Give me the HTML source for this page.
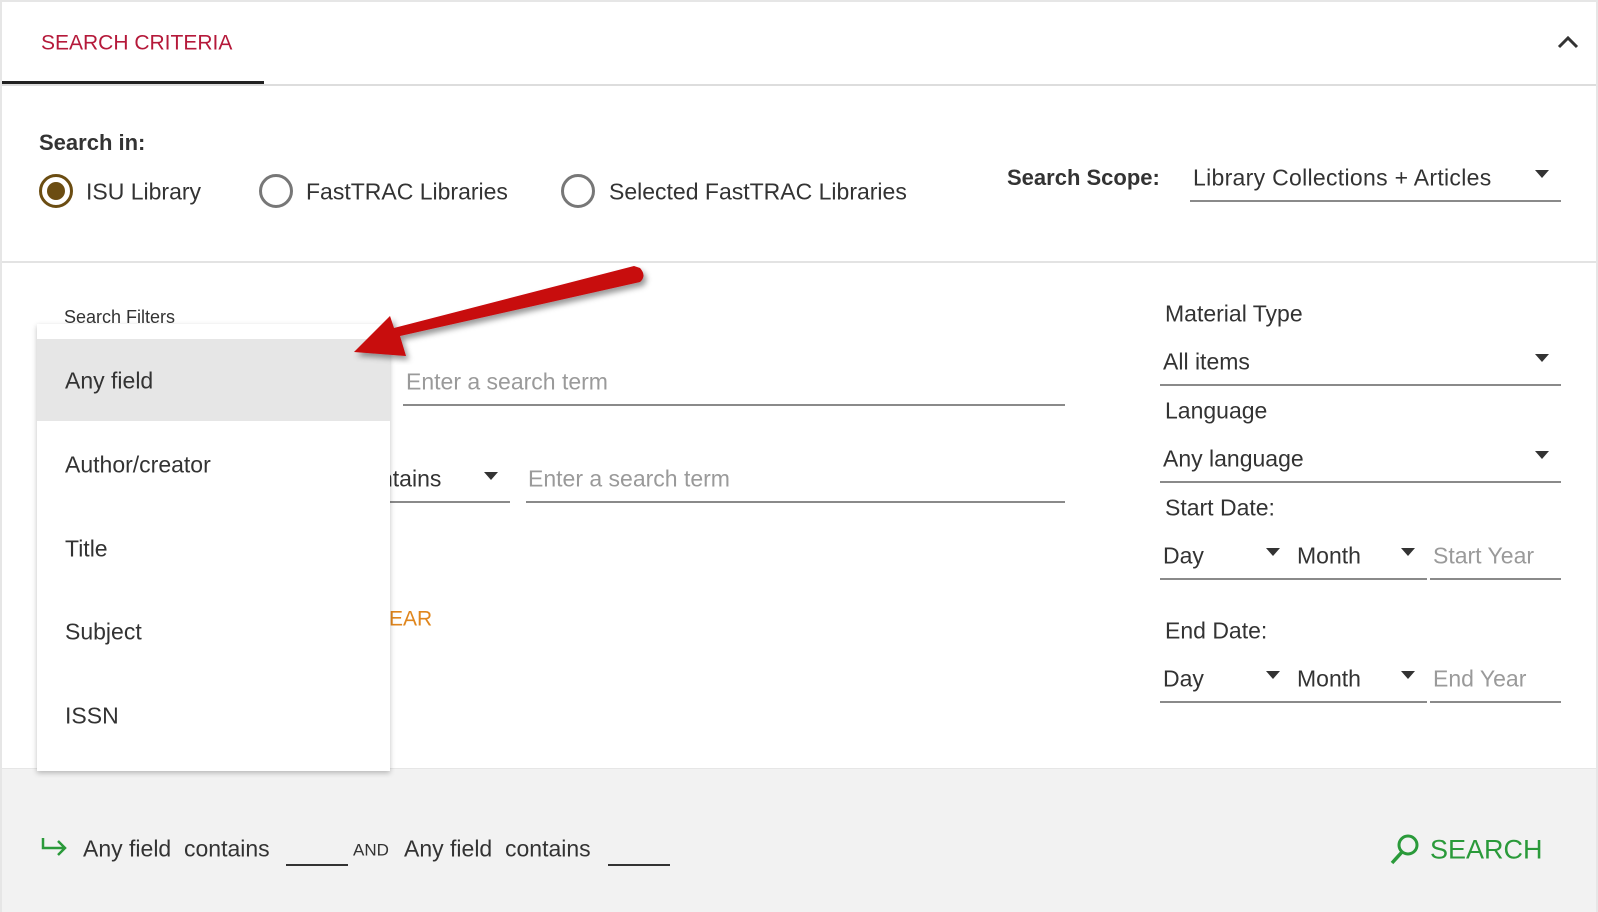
<!DOCTYPE html>
<html><head><meta charset="utf-8"><style>
*{margin:0;padding:0;box-sizing:border-box}
body{width:1598px;height:912px;background:#fff;position:relative;overflow:hidden;font-family:"Liberation Sans",sans-serif;color:#333}
.a{position:absolute;white-space:nowrap;line-height:1}
.t{font-size:23px;transform:translateY(-50%)}
.ph{color:#9a9a9a}
.ln{position:absolute;height:2px;background:#8a8a8a}
.tri{position:absolute;width:0;height:0;border-left:7px solid transparent;border-right:7px solid transparent;border-top:8px solid #333}
.rad{position:absolute;width:34px;height:34px;border:3px solid #777;border-radius:50%;transform:translate(-50%,-50%)}
</style></head><body>
<div style="position:absolute;left:0;top:0;width:1598px;height:912px;border:2px solid #e6e6e6;border-bottom:none"></div>
<div class="a t" style="left:41px;top:43px;font-size:21px;color:#b5193a">SEARCH CRITERIA</div>
<div style="position:absolute;left:2px;top:84px;width:1594px;height:2px;background:#ddd"></div>
<div style="position:absolute;left:2px;top:81px;width:262px;height:3px;background:#222"></div>
<svg style="position:absolute;left:1556px;top:34px" width="24" height="16"><path d="M3 13 L12 4 L21 13" stroke="#333" stroke-width="3" fill="none"/></svg>

<div class="a t" style="left:39px;top:143px;font-weight:bold;font-size:22px">Search in:</div>
<div class="rad" style="left:56px;top:191px;border-color:#6b4d12"></div>
<div style="position:absolute;left:47px;top:182px;width:18px;height:18px;border-radius:50%;background:#6b4d12"></div>
<div class="a t" style="left:86px;top:192px">ISU Library</div>
<div class="rad" style="left:276px;top:191px"></div>
<div class="a t" style="left:306px;top:192px">FastTRAC Libraries</div>
<div class="rad" style="left:578px;top:191px"></div>
<div class="a t" style="left:609px;top:192px">Selected FastTRAC Libraries</div>
<div class="a t" style="left:1007px;top:178px;font-weight:bold;font-size:22px">Search Scope:</div>
<div class="a t" style="left:1193px;top:178px;letter-spacing:0.3px">Library Collections + Articles</div>
<div class="tri" style="left:1535px;top:170px"></div>
<div class="ln" style="left:1190px;top:200px;width:371px"></div>
<div style="position:absolute;left:2px;top:261px;width:1594px;height:2px;background:#e3e3e3"></div>

<div class="a t" style="left:64px;top:317px;font-size:18px">Search Filters</div>
<div class="a t ph" style="left:406px;top:382px">Enter a search term</div>
<div class="ln" style="left:403px;top:404px;width:662px"></div>
<div class="a t" style="left:380px;top:479px">ntains</div>
<div class="tri" style="left:484px;top:472px"></div>
<div class="ln" style="left:380px;top:501px;width:130px"></div>
<div class="a t ph" style="left:528px;top:479px">Enter a search term</div>
<div class="ln" style="left:526px;top:501px;width:539px"></div>
<div class="a t" style="left:389px;top:619px;color:#e0861d;font-size:21px">EAR</div>

<div class="a t" style="left:1165px;top:314px">Material Type</div>
<div class="a t" style="left:1163px;top:362px">All items</div>
<div class="tri" style="left:1535px;top:354px"></div>
<div class="ln" style="left:1160px;top:384px;width:401px"></div>
<div class="a t" style="left:1165px;top:411px">Language</div>
<div class="a t" style="left:1163px;top:459px">Any language</div>
<div class="tri" style="left:1535px;top:451px"></div>
<div class="ln" style="left:1160px;top:481px;width:401px"></div>
<div class="a t" style="left:1165px;top:508px">Start Date:</div>
<div class="a t" style="left:1163px;top:556px">Day</div>
<div class="tri" style="left:1266px;top:548px"></div>
<div class="a t" style="left:1297px;top:556px">Month</div>
<div class="tri" style="left:1401px;top:548px"></div>
<div class="a t ph" style="left:1433px;top:556px">Start Year</div>
<div class="ln" style="left:1160px;top:578px;width:267px"></div>
<div class="ln" style="left:1430px;top:578px;width:131px"></div>
<div class="a t" style="left:1165px;top:631px">End Date:</div>
<div class="a t" style="left:1163px;top:679px">Day</div>
<div class="tri" style="left:1266px;top:671px"></div>
<div class="a t" style="left:1297px;top:679px">Month</div>
<div class="tri" style="left:1401px;top:671px"></div>
<div class="a t ph" style="left:1433px;top:679px">End Year</div>
<div class="ln" style="left:1160px;top:701px;width:267px"></div>
<div class="ln" style="left:1430px;top:701px;width:131px"></div>

<div style="position:absolute;left:2px;top:768px;width:1594px;height:144px;background:#f2f2f2;border-top:1px solid #e6e6e6"></div>
<svg style="position:absolute;left:40px;top:836px" width="30" height="22"><path d="M3 2 V12 H25 M18 5 L25 12 L18 19" stroke="#2a9a3a" stroke-width="2.5" fill="none"/></svg>
<div class="a t" style="left:83px;top:849px">Any field&nbsp; contains</div>
<div class="ln" style="left:286px;top:864px;width:62px;background:#333"></div>
<div class="a t" style="left:353px;top:850px;font-size:17px">AND</div>
<div class="a t" style="left:404px;top:849px">Any field&nbsp; contains</div>
<div class="ln" style="left:608px;top:864px;width:62px;background:#333"></div>
<svg style="position:absolute;left:1388px;top:832px" width="34" height="34"><circle cx="20" cy="13" r="9" stroke="#2a9a3a" stroke-width="3" fill="none"/><path d="M14 20 L4 31" stroke="#2a9a3a" stroke-width="3.5"/></svg>
<div class="a t" style="left:1430px;top:850px;color:#2a9a3a;font-size:27px">SEARCH</div>

<div style="position:absolute;left:37px;top:324px;width:353px;height:447px;background:#fff;box-shadow:0 2px 5px rgba(0,0,0,.25)">
<div style="position:absolute;left:0;top:15px;width:353px;height:82px;background:#e6e6e6"></div>
<div class="a t" style="left:28px;top:57px">Any field</div>
<div class="a t" style="left:28px;top:141px">Author/creator</div>
<div class="a t" style="left:28px;top:225px">Title</div>
<div class="a t" style="left:28px;top:308px">Subject</div>
<div class="a t" style="left:28px;top:392px">ISSN</div>
</div>

<svg style="position:absolute;left:340px;top:258px" width="320" height="110">
<defs><filter id="s"><feDropShadow dx="3" dy="4" stdDeviation="3" flood-opacity=".4"/></filter></defs>
<g filter="url(#s)"><path d="M300 10 Q307 18 300 24 L60 78 L66 98 L14 94 L50 58 L54 70 L294 8 Z" fill="#c8070c"/></g>
</svg>
</body></html>
